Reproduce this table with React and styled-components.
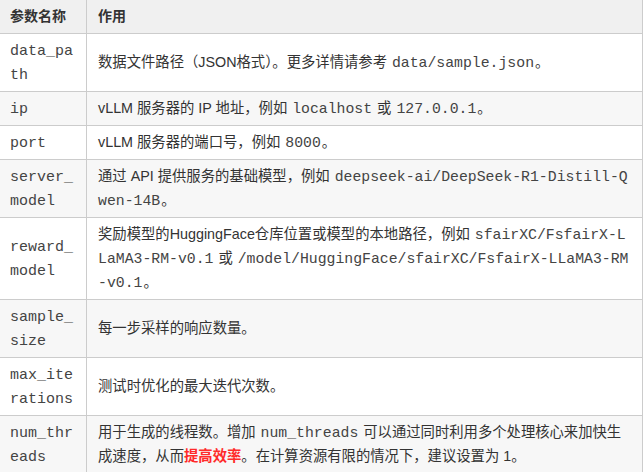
import React from "react";
import styled, { createGlobalStyle } from "styled-components";

const GlobalStyle = createGlobalStyle`
  html, body {
    margin: 0;
    padding: 0;
    background: #ffffff;
  }
  body {
    font-family: "Liberation Sans", "Noto Sans CJK SC", sans-serif;
    font-size: 14px;
    color: #333333;
    overflow: hidden;
  }
`;

const Table = styled.table`
  width: 644px;
  margin: -1px 0 0 -1px;
  border-collapse: collapse;
  table-layout: fixed;
  line-height: 24px;
`;

const HeadCell = styled.th`
  background: #f0f0f0;
  border: 1px solid #cccccc;
  padding: 4px 10px 5px 10px;
  text-align: left;
  font-weight: 700;
  color: #333333;
  width: ${(p) => (p.$narrow ? "66px" : "auto")};
  padding-left: ${(p) => (p.$narrow ? "10px" : "11px")};
`;

const Row = styled.tr`
  background: ${(p) => (p.$shaded ? "#f7f7f7" : "#ffffff")};
`;

const NameCell = styled.td`
  border: 1px solid #cccccc;
  padding: 4px 10px 5px 10px;
  vertical-align: middle;
  word-break: break-all;
`;

const DescCell = styled.td`
  border: 1px solid #cccccc;
  padding: 4px 10px 5px 11px;
  vertical-align: middle;
  word-break: break-all;
  font-size: 14.33px;
`;

const Code = styled.code`
  font-family: "Liberation Mono", "Courier New", monospace;
  font-size: ${(p) => (p.$bare ? "15px" : "14.8px")};
  line-height: 1;
  color: #444444;
  padding: 0 ${(p) => (p.$bare ? "0" : "1px")};
`;

const Strong = styled.strong`
  color: #ff2a2a;
  font-weight: 700;
`;

const rows = [
  {
    name: "data_path",
    desc: (
      <>
        数据文件路径（JSON格式）。更多详情请参考 <Code>data/sample.json</Code>。
      </>
    ),
  },
  {
    name: "ip",
    desc: (
      <>
        vLLM 服务器的 IP 地址，例如 <Code>localhost</Code> 或 <Code>127.0.0.1</Code>。
      </>
    ),
  },
  {
    name: "port",
    desc: (
      <>
        vLLM 服务器的端口号，例如 <Code>8000</Code>。
      </>
    ),
  },
  {
    name: "server_model",
    desc: (
      <>
        通过 API 提供服务的基础模型，例如{" "}
        <Code>deepseek-ai/DeepSeek-R1-Distill-Qwen-14B</Code>。
      </>
    ),
  },
  {
    name: "reward_model",
    desc: (
      <>
        奖励模型的HuggingFace仓库位置或模型的本地路径，例如{" "}
        <Code>sfairXC/FsfairX-LLaMA3-RM-v0.1</Code> 或{" "}
        <Code>/model/HuggingFace/sfairXC/FsfairX-LLaMA3-RM-v0.1</Code>。
      </>
    ),
  },
  { name: "sample_size", desc: "每一步采样的响应数量。" },
  { name: "max_iterations", desc: "测试时优化的最大迭代次数。" },
  {
    name: "num_threads",
    desc: (
      <>
        用于生成的线程数。增加 <Code>num_threads</Code>{" "}
        可以通过同时利用多个处理核心来加快生成速度，从而<Strong>提高效率</Strong>。在计算资源有限的情况下，建议设置为 1。
      </>
    ),
  },
];

export default function App() {
  return (
    <>
      <GlobalStyle />
      <Table>
        <thead>
          <tr>
            <HeadCell $narrow>参数名称</HeadCell>
            <HeadCell>作用</HeadCell>
          </tr>
        </thead>
        <tbody>
          {rows.map((r, i) => (
            <Row key={r.name} $shaded={i % 2 === 1}>
              <NameCell>
                <Code $bare>{r.name}</Code>
              </NameCell>
              <DescCell>{r.desc}</DescCell>
            </Row>
          ))}
        </tbody>
      </Table>
    </>
  );
}
